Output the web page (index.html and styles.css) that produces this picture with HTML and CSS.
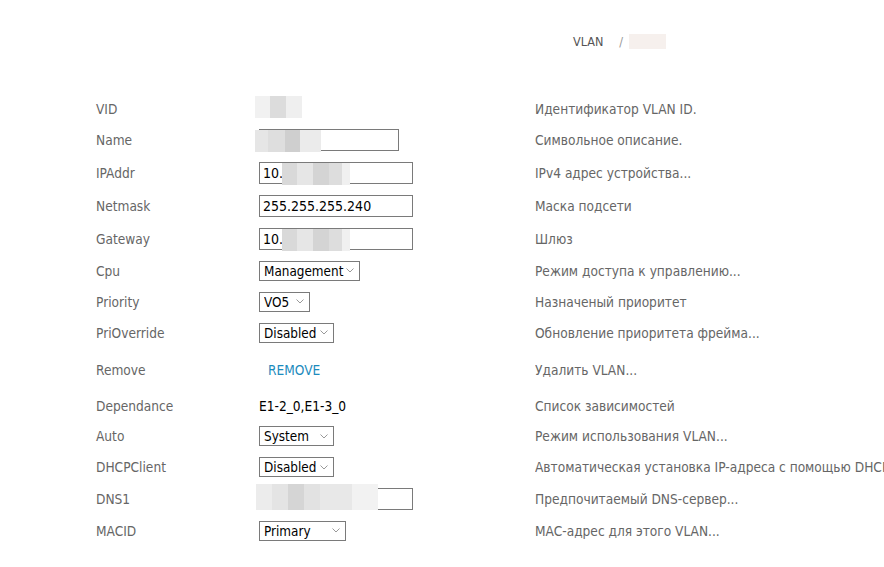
FILE: index.html
```html
<!DOCTYPE html>
<html lang="ru">

<head>
  <meta charset="UTF-8" />
  <title>VLAN</title>
  <link rel="stylesheet" href="styles.css">
</head>

<body>

  <div class="breadcrumb">
    <span>VLAN</span>
    <span class="sep">/</span>
    <span class="crumb-hidden"></span>
  </div>

  <div class="form-vlan">

    <div class="row">
      <div class="label">VID</div>
      <div class="value"><span class="blur blur-vid"></span></div>
      <div class="desc">Идентификатор VLAN ID.</div>
    </div>

    <div class="row row-name">
      <div class="label">Name</div>
      <div class="value">
        <div class="field">
          <input type="text" class="inp inp-name" value="" />
          <span class="blur blur-name"></span>
        </div>
      </div>
      <div class="desc">Символьное описание.</div>
    </div>

    <div class="row row-wide">
      <div class="label">IPAddr</div>
      <div class="value">
        <div class="field">
          <input type="text" class="inp" value="10.2" />
          <span class="blur blur-ip"></span>
        </div>
      </div>
      <div class="desc">IPv4 адрес устройства...</div>
    </div>

    <div class="row row-wide">
      <div class="label">Netmask</div>
      <div class="value"><input type="text" class="inp" value="255.255.255.240" /></div>
      <div class="desc">Маска подсети</div>
    </div>

    <div class="row row-wide">
      <div class="label">Gateway</div>
      <div class="value">
        <div class="field">
          <input type="text" class="inp" value="10.2" />
          <span class="blur blur-ip"></span>
        </div>
      </div>
      <div class="desc">Шлюз</div>
    </div>

    <div class="row">
      <div class="label">Cpu</div>
      <div class="value">
        <select class="sel sel-cpu">
          <option>Management</option>
        </select>
      </div>
      <div class="desc">Режим доступа к управлению...</div>
    </div>

    <div class="row">
      <div class="label">Priority</div>
      <div class="value">
        <select class="sel sel-prio">
          <option>VO5</option>
        </select>
      </div>
      <div class="desc">Назначеный приоритет</div>
    </div>

    <div class="row">
      <div class="label">PriOverride</div>
      <div class="value">
        <select class="sel sel-mid">
          <option>Disabled</option>
        </select>
      </div>
      <div class="desc">Обновление приоритета фрейма...</div>
    </div>

    <div class="row row-remove">
      <div class="label">Remove</div>
      <div class="value"><a href="#" class="link-remove">REMOVE</a></div>
      <div class="desc">Удалить VLAN...</div>
    </div>

    <div class="row row-dep">
      <div class="label">Dependance</div>
      <div class="value text-value">E1-2_0,E1-3_0</div>
      <div class="desc">Список зависимостей</div>
    </div>

    <div class="row row-auto">
      <div class="label">Auto</div>
      <div class="value">
        <select class="sel sel-mid">
          <option>System</option>
        </select>
      </div>
      <div class="desc">Режим использования VLAN...</div>
    </div>

    <div class="row row-dhcp">
      <div class="label">DHCPClient</div>
      <div class="value">
        <select class="sel sel-mid">
          <option>Disabled</option>
        </select>
      </div>
      <div class="desc">Автоматическая установка IP-адреса с помощью DHCP</div>
    </div>

    <div class="row">
      <div class="label">DNS1</div>
      <div class="value">
        <div class="field">
          <input type="text" class="inp" value="" />
          <span class="blur blur-dns"></span>
        </div>
      </div>
      <div class="desc">Предпочитаемый DNS-сервер...</div>
    </div>

    <div class="row row-mac">
      <div class="label">MACID</div>
      <div class="value">
        <select class="sel sel-mac">
          <option>Primary</option>
        </select>
      </div>
      <div class="desc">MAC-адрес для этого VLAN...</div>
    </div>

  </div>

</body>

</html>
```

FILE: styles.css
```css
:root {
  --texto: #666;
  --borda: #7a7a7a;
  --link: #1d8bbd;
}

body {
  margin: 0;
  font-family: 'DejaVu Sans Condensed', 'DejaVu Sans', Verdana, sans-serif;
  font-size: 13.6px;
  color: var(--texto);
  background: #fff;
  overflow: hidden;
}

/* Topo */
.breadcrumb {
  display: flex;
  align-items: center;
  height: 16px;
  padding: 33px 0 0 573px;
  font-size: 12.5px;
  color: #555;
}

.breadcrumb .sep {
  margin-left: 16px;
  color: #999;
}

.crumb-hidden {
  display: inline-block;
  width: 37px;
  height: 15px;
  margin-left: 6px;
  background: #f6f0ed;
}

/* Formulario */
.form-vlan {
  margin-top: 44px;
  padding-left: 96px;
}

.row {
  display: grid;
  grid-template-columns: 163px 276px 1fr;
  align-items: center;
  height: 31px;
  white-space: nowrap;
}

.row-name {
  height: 32px;
}

.row-wide {
  height: 33px;
}

.row-remove {
  height: 43px;
}

.row-dep {
  height: 30px;
}

.row-auto {
  height: 30px;
}

.row-dhcp {
  height: 32px;
}

.row-mac {
  height: 33px;
}

.desc {
  overflow: hidden;
}

.text-value {
  color: #000;
}

.field {
  position: relative;
  display: inline-block;
}

.inp {
  box-sizing: border-box;
  width: 154px;
  height: 22px;
  margin: 0;
  padding: 0 3px;
  border: 1px solid var(--borda);
  font-family: inherit;
  font-size: 14px;
  color: #000;
  background: #fff;
  outline: none;
}

.inp-name {
  width: 140px;
}

.sel {
  box-sizing: border-box;
  height: 20px;
  margin: 0;
  padding: 1px 10px 0 4px;
  border: 1px solid var(--borda);
  border-radius: 0;
  font-family: inherit;
  font-size: 13.4px;
  line-height: 17px;
  color: #000;
  appearance: none;
  -webkit-appearance: none;
  background: #fff url("data:image/svg+xml,%3Csvg xmlns='http://www.w3.org/2000/svg' width='8' height='5'%3E%3Cpath d='M0.5 0.5 L4 4 L7.5 0.5' fill='none' stroke='%23999' stroke-width='1'/%3E%3C/svg%3E") no-repeat right 5px center;
}

.sel-cpu {
  width: 101px;
}

.sel-prio {
  width: 51px;
}

.sel-mid {
  width: 75px;
}

.sel-mac {
  width: 87px;
}

.link-remove {
  margin-left: 9px;
  color: var(--link);
  text-decoration: none;
}

/* Dados ocultos */
.blur {
  display: inline-block;
  position: absolute;
}

.blur-vid {
  position: static;
  width: 47px;
  height: 22px;
  margin-left: -4px;
  background: linear-gradient(to right, #f1f1f1 0 15px, #dcdcdc 15px 31px, #efefef 31px);
}

.blur-name {
  left: -4px;
  top: 1px;
  width: 66px;
  height: 22px;
  background: linear-gradient(to right, #e6e6e6 0 13px, #dedede 13px 30px, #cfcfcf 30px 45px, #ebebeb 45px);
}

.blur-ip {
  left: 23px;
  top: 1px;
  width: 68px;
  height: 22px;
  background: linear-gradient(to right, #d9d9d9 0 15px, #e6e6e6 15px 31px, #d4d4d4 31px 47px, #dddddd 47px 60px, #f0f0f0 60px);
}

.blur-dns {
  left: -3px;
  top: -4px;
  width: 122px;
  height: 26px;
  background: linear-gradient(to right, #ececec 0 16px, #e4e4e4 16px 32px, #d5d5d5 32px 48px, #e2e2e2 48px 64px, #e8e8e8 64px 96px, #f2f2f2 96px);
}
```
